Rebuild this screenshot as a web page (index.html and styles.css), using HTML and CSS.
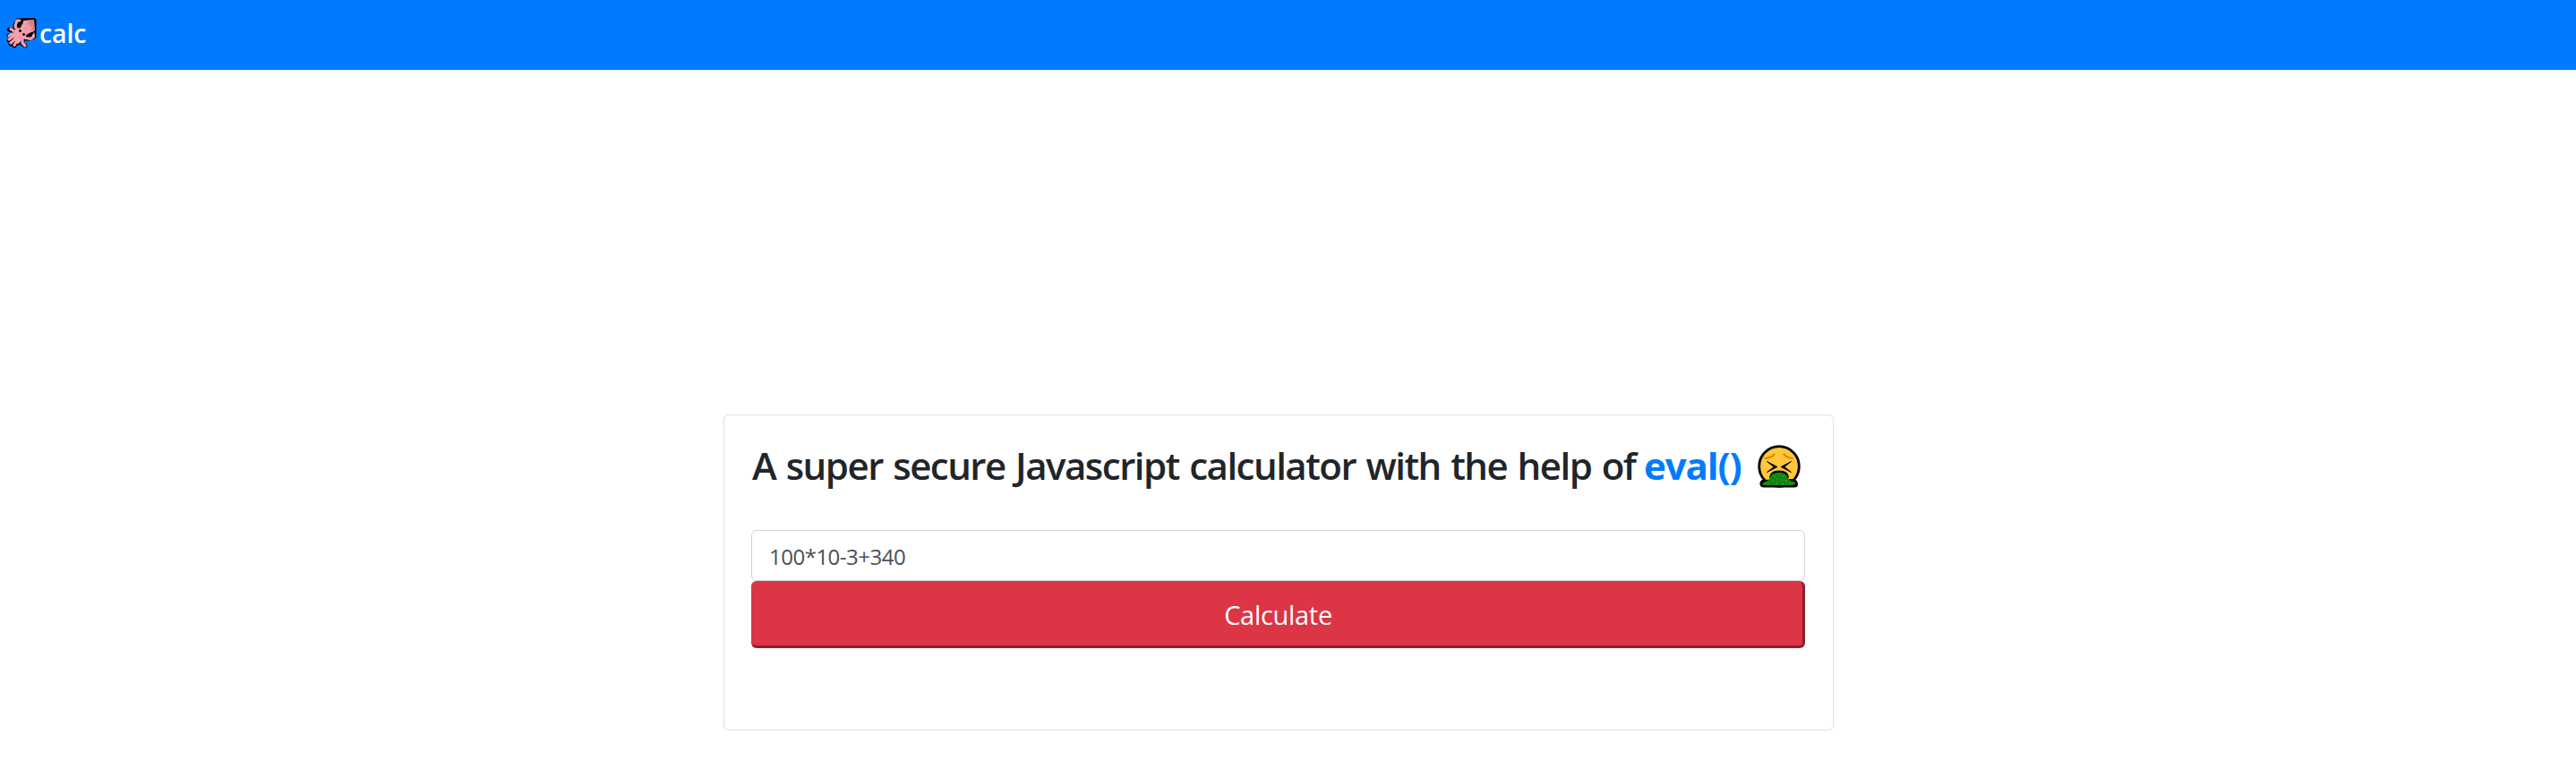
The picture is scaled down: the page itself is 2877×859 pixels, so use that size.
FILE: index.html
```html
<!DOCTYPE html>
<html lang="en">
<head>
<meta charset="utf-8">
<title>calc</title>
<link rel="stylesheet" href="styles.css">
</head>
<body>
<nav class="navbar">
  <svg class="squid" viewBox="0 0 34 34" aria-hidden="true">
    <g fill="none" stroke-linecap="round" stroke-linejoin="round">
      <g stroke="#000" stroke-width="5">
        <path d="M13 3 L31 2.500 L31 21 L26 23 L20 23 L10 14 L10 8Z" fill="#000"/>
        <path d="M12 15 L8 15 L3.500 13M12 18 L3 20M14 20 L3 25M14 20 L5 29M15 21 L9 31M17 21 L13 28M18 22 L18 29 L21 31"/>
      </g>
      <g stroke="#f4a0ac" stroke-width="3.200">
        <path d="M12 14 L10 9 L12 3 L15 3"/>
        <path d="M20 22 L27 23.500 L30.500 21 L30 17.500"/>
        <path d="M13 16 L9 15 L5 12.500M13 18 L6 18 L3 20M14 20 L8 20.500 L3 24M14 20 L5 28M15 21 L9 30.500M17 21 L13.500 27M18 22 L18 28 L21 31"/>
      </g>
      <path d="M19 3 L31 2.500 L31.500 14 L24 22 L13 22 L10 15Z" fill="#f4a0ac"/>
      <path d="M22 2.500 L31 2 L32 14 L29 14 L27 8Z" fill="#dc7e8a"/>
      <path d="M17.500 4.500 L14.500 10M29 17 L23.500 20" stroke="#000" stroke-width="3"/>
      <g fill="#dc7e8a"><circle cx="23" cy="7" r="1"/><circle cx="26" cy="9" r="1"/><circle cx="22" cy="12" r="1"/><circle cx="27" cy="13" r="1"/></g>
      <g fill="#000"><circle cx="15.500" cy="14.500" r="1.400"/><circle cx="19.500" cy="18.500" r="1.400"/></g>
    </g>
  </svg>
  <span class="brand">calc</span>
</nav>
<main class="page">
  <section class="card">
    <h1 class="title"><span class="lead">A super secure Javascript calculator with the help of</span> <strong class="accent">eval()</strong>
      <svg class="emoji" viewBox="0 0 48 48" aria-hidden="true">
        <circle cx="24" cy="24" r="22.300" fill="#ffc73b" stroke="#000" stroke-width="2.800"/>
        <path d="M8.500 15 Q15 14.500 18.500 10.500M39 15 Q33 14.500 29.500 10.500" fill="none" stroke="#dc8b00" stroke-width="2.200" stroke-linecap="round"/>
        <path d="M10.500 18.500 L22 24.500 L10.500 30.500 L18 24.500ZM37.500 18.500 L26 24.500 L37.500 30.500 L30 24.500Z" fill="#000" stroke="#000" stroke-width=".8"/>
        <path d="M13 37 Q13 28.500 24 28.500 Q35 28.500 35 37Z" fill="#000"/>
        <path d="M5 40 Q3 42 3.500 44 Q4 46.500 7 46.500H41Q44 46.500 44 44Q44 41 41 39Z" fill="#000" stroke="#000" stroke-width="2"/>
        <path d="M14 36 Q15 33 18 32 Q24 29.500 30 32 Q34 34 34 38 Q37 41 40 41 Q43 42 42 44 Q40 45.500 37 45 H8 Q5 45 5.500 43 Q6 41.500 9 41 Q13 40 14 36Z" fill="#15820f"/>
        <g fill="#0db51b"><circle cx="19" cy="35" r="1"/><circle cx="24" cy="33.500" r="1"/><circle cx="29" cy="35" r="1"/><circle cx="22" cy="38" r="1"/><circle cx="27" cy="39" r="1"/><circle cx="17" cy="40" r="1"/><circle cx="32" cy="40" r="1"/><circle cx="12" cy="43" r="1"/><circle cx="21" cy="43" r="1"/><circle cx="28" cy="43.500" r="1"/><circle cx="36" cy="43" r="1"/></g>
      </svg>
    </h1>
    <form class="form">
      <input class="field" type="text" value="100*10-3+340" aria-label="Expression">
      <button class="submit" type="button">Calculate</button>
    </form>
  </section>
</main>
</body>
</html>
```
FILE: styles.css
```css
* { box-sizing: border-box; }
body {
  margin: 0;
  background: #fff;
  color: #212529;
  font-family: "Open Sans", "Noto Sans", sans-serif;
}
.navbar {
  display: flex;
  align-items: flex-start;
  height: 78px;
  padding: 20px 7px 0;
  background: #007bff;
}
.squid { width: 34px; height: 34px; flex: none; }
.brand {
  margin: -3px 0 0 3px;
  color: #fff;
  font-size: 28.5px;
  font-weight: 600;
  line-height: 40px;
  letter-spacing: -0.1px;
}
.page { padding: 385px 0 0 808px; }
.card {
  width: 1240px;
  height: 353px;
  padding: 30px;
  border: 1px solid #dfdfdf;
  border-radius: 6px;
}
.title {
  display: flex;
  align-items: flex-start;
  height: 98px;
  margin: 0;
  font-size: 42px;
  line-height: 51px;
  font-weight: 600;
  white-space: nowrap;
}
.lead { width: 997px; padding-left: 1px; letter-spacing: -1.5px; word-spacing: 2px; }
.accent { width: 127px; color: #007bff; font-weight: 700; letter-spacing: -1.1px; }
.emoji { width: 48px; height: 48px; margin-top: 3px; }
.form { display: flex; flex-direction: column; width: 1177px; }
.field {
  height: 57px;
  padding: 2px 19px 0;
  border: 1px solid #ced4da;
  border-radius: 6px;
  background: #fff;
  color: #495057;
  font: 24px "Open Sans", "Noto Sans", sans-serif;
  letter-spacing: -0.5px;
  outline: none;
}
.submit {
  height: 75px;
  padding: 2px 0 0 2px;
  border: solid #dc3545;
  border-width: 1px 3px 3px 1px;
  border-right-color: #8c1f2b;
  border-bottom-color: #8c1f2b;
  border-radius: 6px;
  background: #dc3545;
  color: #fff;
  font: 29px "Open Sans", "Noto Sans", sans-serif;
  letter-spacing: -0.3px;
}
```
